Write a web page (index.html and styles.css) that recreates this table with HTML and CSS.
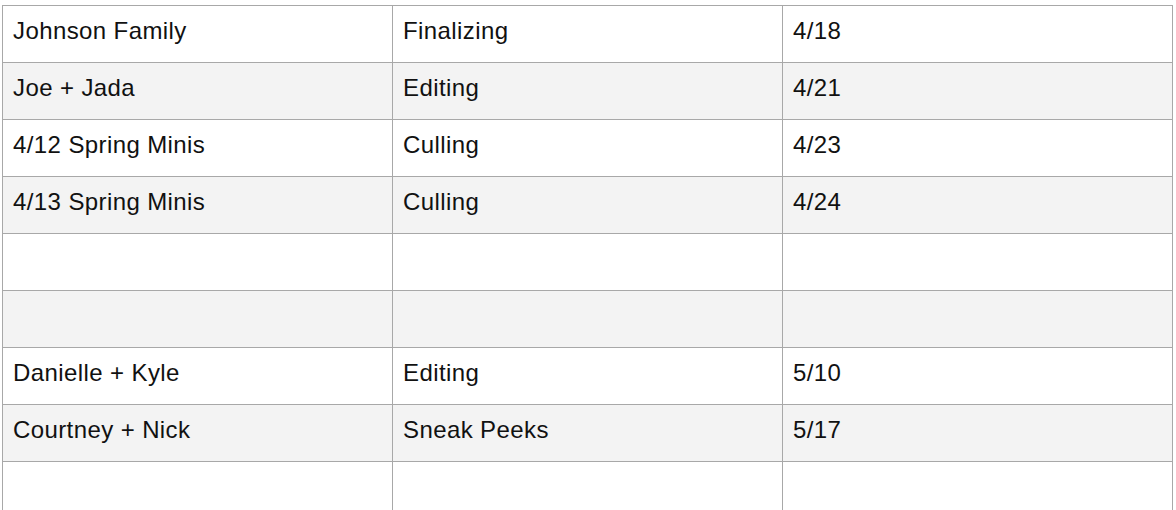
FILE: index.html
```html
<!DOCTYPE html>
<html>
<head>
<meta charset="utf-8">
<link rel="stylesheet" href="styles.css">
</head>
<body>
<div class="wrap">
<table class="sheet">
<colgroup><col class="c"><col class="c"><col class="c"></colgroup>
<tbody>
<tr><td>Johnson Family</td><td>Finalizing</td><td>4/18</td></tr>
<tr class="alt"><td>Joe + Jada</td><td>Editing</td><td>4/21</td></tr>
<tr><td>4/12 Spring Minis</td><td>Culling</td><td>4/23</td></tr>
<tr class="alt"><td>4/13 Spring Minis</td><td>Culling</td><td>4/24</td></tr>
<tr><td></td><td></td><td></td></tr>
<tr class="alt"><td></td><td></td><td></td></tr>
<tr><td>Danielle + Kyle</td><td>Editing</td><td>5/10</td></tr>
<tr class="alt"><td>Courtney + Nick</td><td>Sneak Peeks</td><td>5/17</td></tr>
<tr><td></td><td></td><td></td></tr>
</tbody>
</table>
</div>
</body>
</html>
```
FILE: styles.css
```css
html, body {
  margin: 0;
  padding: 0;
  background: #ffffff;
  overflow: hidden;
}
.wrap {
  padding: 5px 0 0 2px;
}
.sheet {
  border-collapse: collapse;
  table-layout: fixed;
  width: 1171px;
  font-family: "Liberation Sans", Arial, sans-serif;
  font-size: 24px;
  letter-spacing: 0.4px;
  color: #111111;
}
.sheet .c {
  width: 390px;
}
.sheet td {
  border: 1px solid #a8a8a8;
  height: 57px;
  padding: 0 10px 6px;
  box-sizing: border-box;
  vertical-align: middle;
  white-space: nowrap;
}
.sheet tr.alt td {
  background: #f3f3f3;
}
```
